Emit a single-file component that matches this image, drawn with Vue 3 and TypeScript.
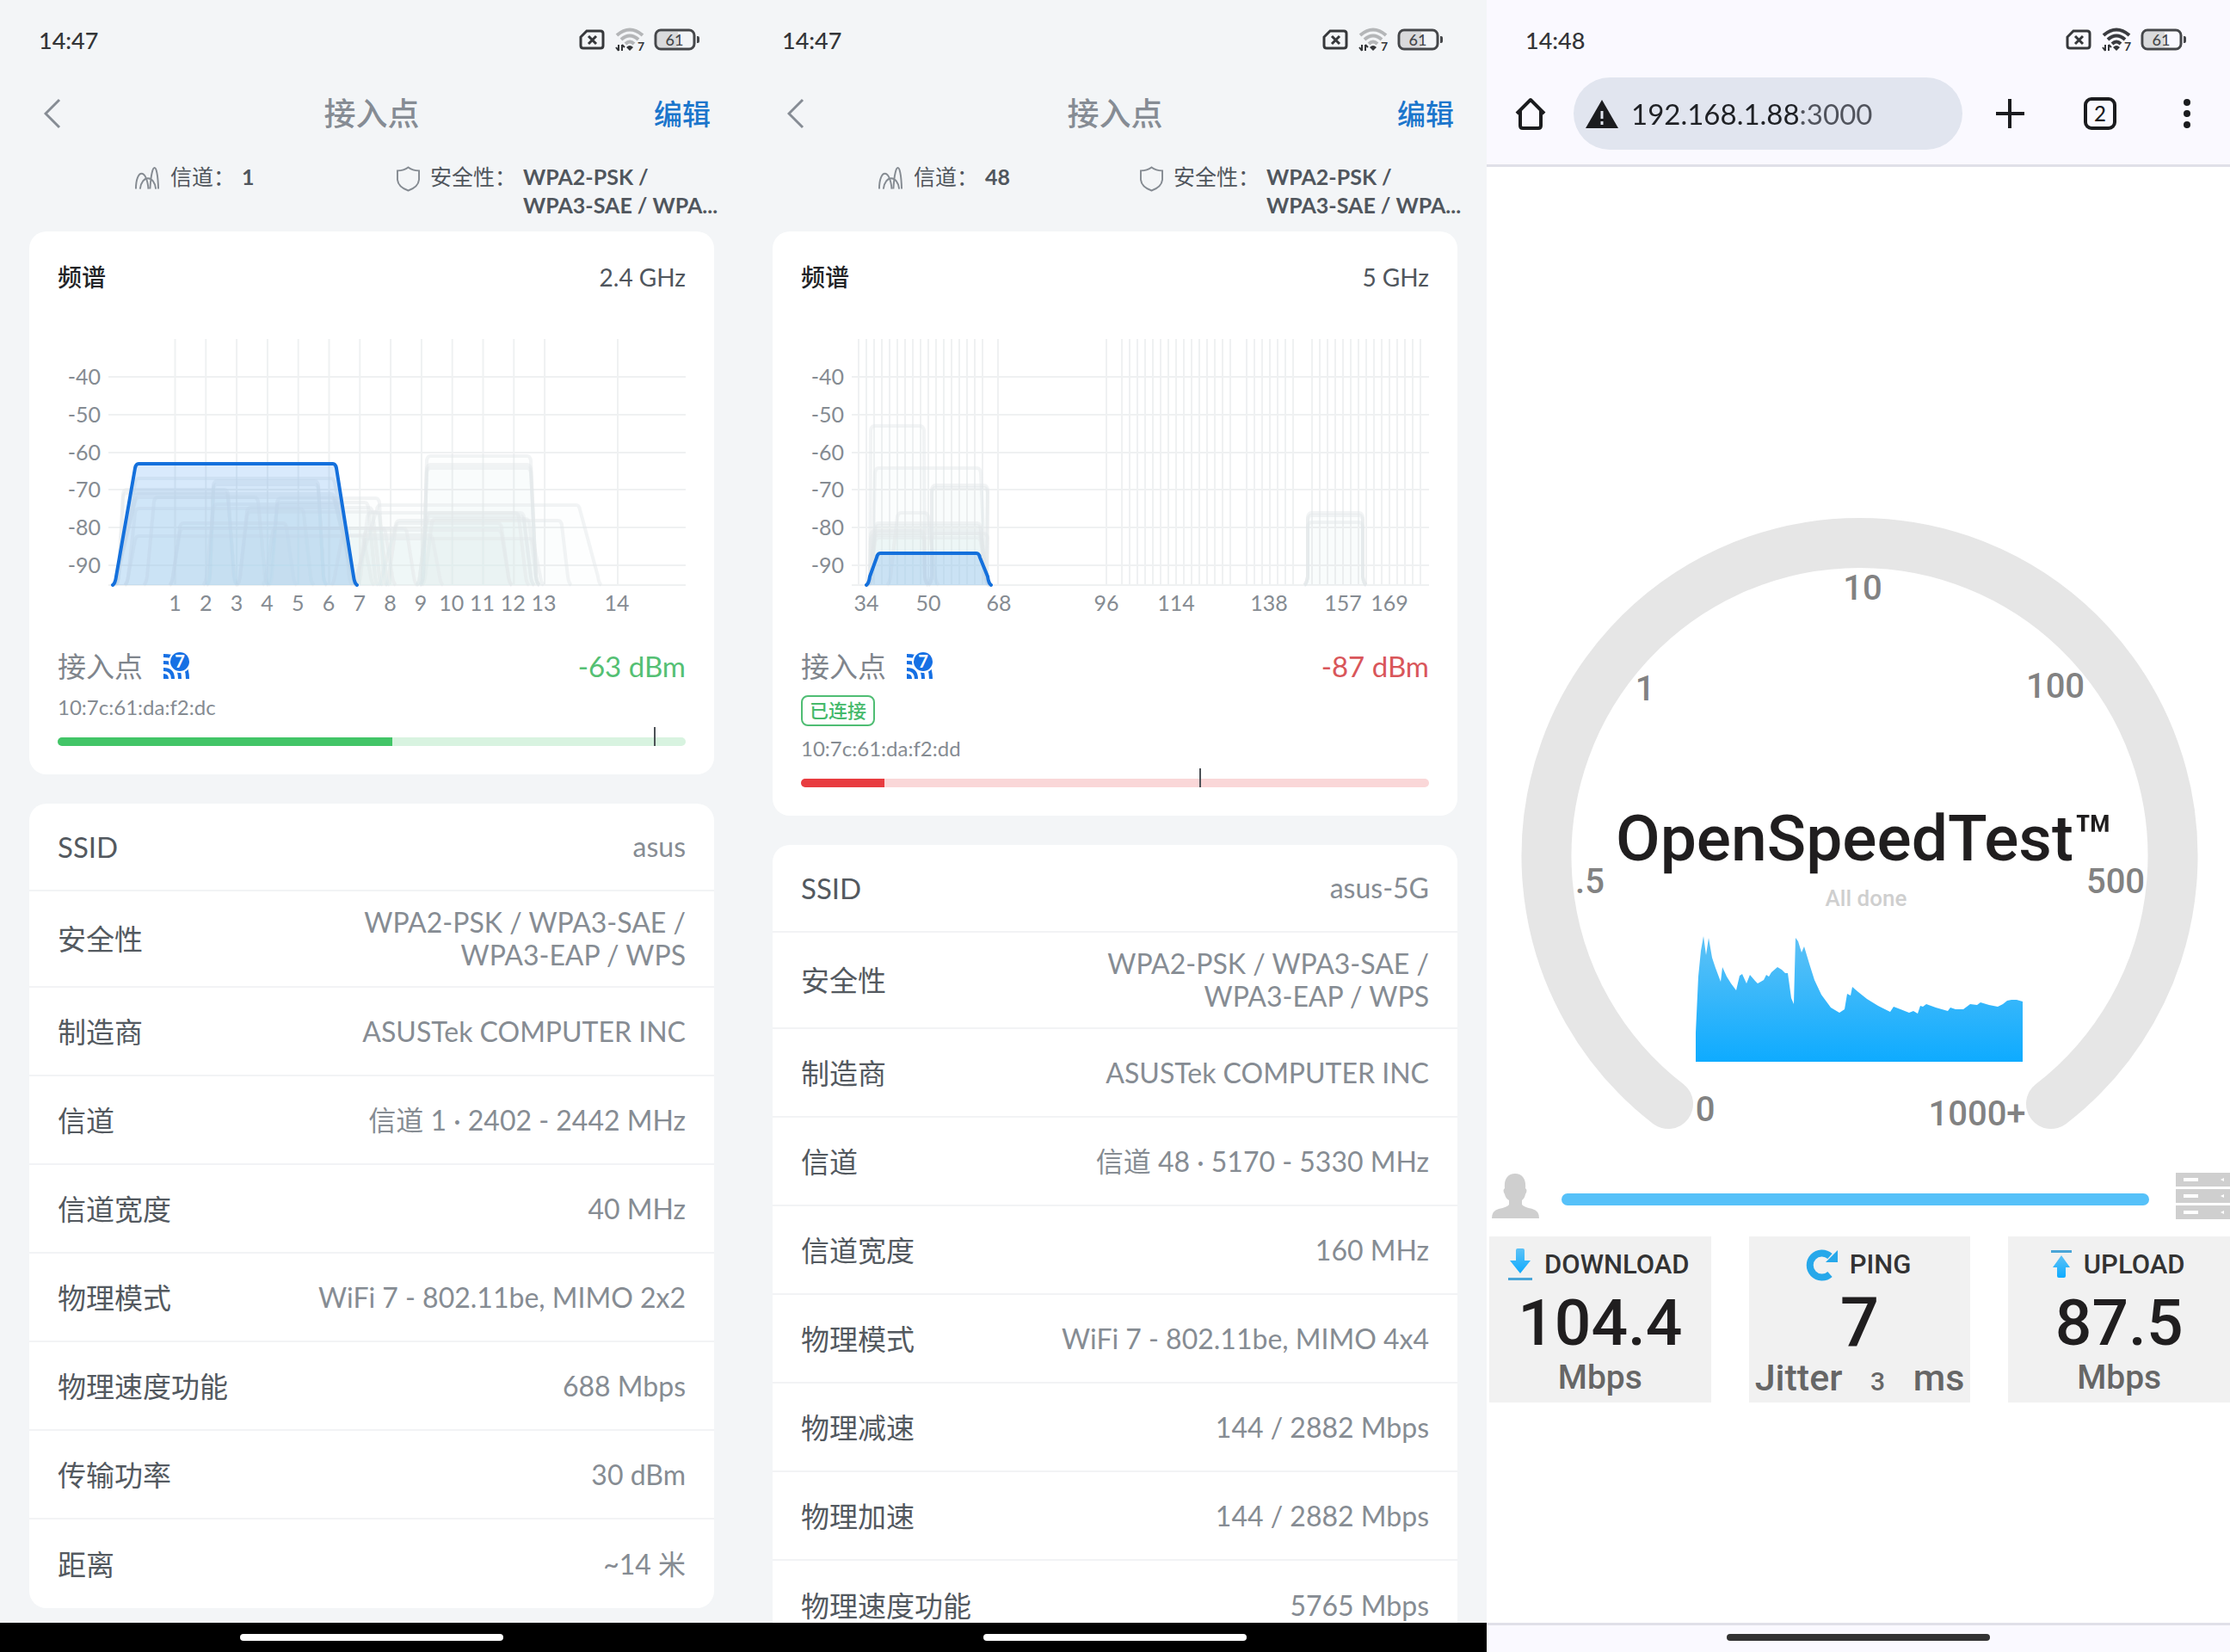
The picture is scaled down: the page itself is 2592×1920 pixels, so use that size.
<script setup lang="ts">
interface Row { label: string; value: string[] }
interface AccessPoint {
  channel: string
  band: string
  grid: number[]
  ticks: { x: number; text: string }[]
  others: string[]
  own: string
  bssid: string
  connected: boolean
  level: string
  tone: 'good' | 'bad'
  fill: number
  mark: number
  rows: Row[]
}
interface Phone { time: string; ap?: AccessPoint }

const BASE = 680
const levels = [-40, -50, -60, -70, -80, -90].map((db, i) => ({ db, y: 438 + Math.round(i * 43.8) }))

/** Signal outline: flat top between l and r, feet reaching the base line. */
function trap(l: number, r: number, y: number, footL: number, footR: number): string {
  const h = BASE - y
  const k = Math.min(5, h / 4)
  return `M${footL} ${BASE} Q${footL + 3} ${BASE - 2} ${footL + 4} ${BASE - k * 2} L${l - 3} ${y + k} Q${l - 2} ${y} ${l + 1} ${y} ` +
    `L${r - 1} ${y} Q${r + 2} ${y} ${r + 3} ${y + k} L${footR - 4} ${BASE - k * 2} Q${footR - 3} ${BASE - 2} ${footR} ${BASE}`
}
const span = (from: number, step: number, count: number): number[] =>
  Array.from({ length: count }, (_, i) => from + step * i)
const narrow = (l: number, r: number, y: number): string => trap(l, r, y, l - 15, r + 15)

const security = ['WPA2-PSK / WPA3-SAE /', 'WPA3-EAP / WPS']

const ap24: AccessPoint = {
  channel: '1',
  band: '2.4 GHz',
  grid: [...span(203.5, 35.8, 13), 718],
  ticks: [...span(203.5, 35.7, 13).map((x, i) => ({ x, text: String(i + 1) })), { x: 717, text: '14' }],
  others: [
    trap(499, 614, 530, 488, 627), trap(499, 614, 540, 488, 627), trap(499, 614, 544, 488, 627),
    trap(160, 386, 556, 132, 414), trap(251, 367, 559, 240, 380), trap(251, 367, 563, 240, 380),
    trap(146, 262, 569, 134, 276), trap(146, 262, 573, 134, 276), trap(160, 386, 574, 132, 414), trap(160, 386, 578, 132, 414),
    narrow(182, 297, 578), trap(325, 438, 579, 312, 450), narrow(325, 425, 584), narrow(290, 430, 590),
    narrow(251, 395, 586), narrow(160, 350, 591), narrow(290, 438, 595),
    trap(441, 671, 587, 410, 699), trap(463, 650, 605, 440, 664),
    narrow(430, 606, 596), narrow(499, 600, 596), narrow(499, 606, 600), narrow(505, 612, 603),
    narrow(463, 580, 608), narrow(320, 470, 614), narrow(212, 330, 608), narrow(212, 445, 614),
    narrow(160, 420, 623), narrow(427, 617, 626), narrow(427, 580, 616), narrow(400, 500, 622),
  ],
  own: trap(160, 388, 539, 131, 415),
  bssid: '10:7c:61:da:f2:dc',
  connected: false,
  level: '-63 dBm',
  tone: 'good',
  fill: 53.3,
  mark: 94.9,
  rows: [
    { label: 'SSID', value: ['asus'] },
    { label: '安全性', value: security },
    { label: '制造商', value: ['ASUSTek COMPUTER INC'] },
    { label: '信道', value: ['信道 1 · 2402 - 2442 MHz'] },
    { label: '信道宽度', value: ['40 MHz'] },
    { label: '物理模式', value: ['WiFi 7 - 802.11be, MIMO 2x2'] },
    { label: '物理速度功能', value: ['688 Mbps'] },
    { label: '传输功率', value: ['30 dBm'] },
    { label: '距离', value: ['~14 米'] },
  ],
}

const ap5: AccessPoint = {
  channel: '48',
  band: '5 GHz',
  grid: [...span(134, 9, 17), 296, 422, ...span(440, 9, 15), ...span(585, 9, 7), ...span(661, 9, 15)],
  ticks: [
    { x: 143, text: '34' }, { x: 215, text: '50' }, { x: 297, text: '68' }, { x: 422, text: '96' },
    { x: 503, text: '114' }, { x: 611, text: '138' }, { x: 697, text: '157' }, { x: 751, text: '169' },
  ],
  others: [
    trap(151, 207, 495, 143, 215), trap(156, 273, 544, 146, 285), trap(222, 281, 564, 215, 287), trap(222, 281, 567, 215, 287),
    narrow(182, 212, 596), trap(156, 273, 608, 144, 286), trap(156, 273, 611, 144, 286), trap(156, 273, 616, 144, 286),
    trap(151, 207, 617, 143, 215), trap(156, 273, 620, 144, 286), trap(151, 207, 622, 143, 215), trap(222, 281, 620, 215, 287),
    trap(156, 273, 625, 144, 286), trap(659, 717, 596, 652, 724), trap(659, 717, 599, 652, 724), trap(659, 717, 607, 652, 724),
  ],
  own: trap(158, 272, 643, 143, 288),
  bssid: '10:7c:61:da:f2:dd',
  connected: true,
  level: '-87 dBm',
  tone: 'bad',
  fill: 13.3,
  mark: 63.4,
  rows: [
    { label: 'SSID', value: ['asus-5G'] },
    { label: '安全性', value: security },
    { label: '制造商', value: ['ASUSTek COMPUTER INC'] },
    { label: '信道', value: ['信道 48 · 5170 - 5330 MHz'] },
    { label: '信道宽度', value: ['160 MHz'] },
    { label: '物理模式', value: ['WiFi 7 - 802.11be, MIMO 4x4'] },
    { label: '物理减速', value: ['144 / 2882 Mbps'] },
    { label: '物理加速', value: ['144 / 2882 Mbps'] },
    { label: '物理速度功能', value: ['5765 Mbps'] },
  ],
}

const phones: Phone[] = [{ time: '14:47', ap: ap24 }, { time: '14:47', ap: ap5 }, { time: '14:48' }]

const gaugeMarks = [
  { x: 437, y: 697, text: '10' }, { x: 184, y: 814, text: '1' }, { x: 661, y: 811, text: '100' },
  { x: 120, y: 1038, text: '.5' }, { x: 731, y: 1038, text: '500' }, { x: 254, y: 1303, text: '0' },
  { x: 570, y: 1308, text: '1000+' },
]
const speedCurve = '243,1234 243,1200 246,1135 249,1105 252,1088 255,1110 258,1090 262,1113 266,1125 272,1141 274,1124 279,1135 284,1143 290,1151 294,1134 297,1132 302,1143 306,1133 312,1140 315,1143 322,1139 325,1133 328,1135 331,1130 338,1124 343,1127 347,1131 350,1131 354,1160 357,1167 359,1090 362,1094 366,1107 369,1100 375,1120 381,1139 389,1156 400,1171 410,1177 416,1173 419,1155 423,1157 425,1147 432,1153 442,1161 455,1169 469,1176 473,1170 481,1173 491,1177 496,1175 501,1178 504,1169 507,1170 511,1167 522,1171 536,1175 539,1171 545,1173 554,1173 562,1167 570,1168 574,1165 584,1168 594,1170 600,1167 605,1163 610,1162 616,1162 623,1164 623,1234'
</script>

<template>
  <main class="board">
    <section v-for="(phone, n) in phones" :key="n" class="phone" :class="{ browser: !phone.ap }">
      <div class="status">
        <span class="time">{{ phone.time }}</span>
        <svg class="sim" viewBox="0 0 30 24"><path d="M9 2H25Q28 2 28 5V19Q28 22 25 22H5Q2 22 2 19V9Z" /><path d="M11 8L20 17M20 8L11 17" /></svg>
        <svg class="wifi" viewBox="0 -5 38 38">
          <g class="waves"><path d="M2 9Q17 -4 32 9" /><path d="M7 14Q17 5 27 14" /><path d="M12 19Q17 14 22 19" /></g>
          <path class="dark" d="M13 23Q17 19 21 23L17 27Z" />
          <path class="arrows" d="M4 20V27M1 23L4 27M8 27V20M11 23L8 20" />
          <text x="30" y="27">7</text>
        </svg>
        <svg class="battery" viewBox="0 0 54 26">
          <path class="charge" d="M7 4H28V22H7Q4 22 4 19V7Q4 4 7 4Z" /><rect x="2" y="2" width="45" height="22" rx="6" /><path class="nub" d="M50 9H51Q53 9 53 11V15Q53 17 51 17H50Z" />
          <text x="24" y="20">61</text>
        </svg>
      </div>

      <template v-if="phone.ap">
        <header class="nav">
          <button class="back" aria-label="返回"><svg viewBox="0 0 20 36"><path d="M18 2L2 18L18 34" /></svg></button>
          <h1>接入点</h1>
          <button class="edit">编辑</button>
        </header>
        <div class="info">
          <div class="fact">
            <svg class="peaks" viewBox="0 0 30 28"><path d="M1 27C1 3 14 2 16 27M6 27C8 10 23 10 25 27M18 27C20 -7 27 -7 28 27" /></svg>
            <span>信道：</span><b>{{ phone.ap.channel }}</b>
          </div>
          <div class="fact">
            <svg class="shield" viewBox="0 0 28 30"><path d="M14 1Q19 5 27 5V16Q26 25 14 29Q2 25 1 16V5Q9 5 14 1Z" /></svg>
            <span>安全性：</span><b>WPA2-PSK /<br>WPA3-SAE / WPA...</b>
          </div>
        </div>
        <div class="content">
          <article class="card spectrum">
            <div class="head"><h2>频谱</h2><span>{{ phone.ap.band }}</span></div>
            <svg class="chart" viewBox="67 390 730 334">
              <g class="grid">
                <path v-for="x in phone.ap.grid" :key="x" :d="`M${x} 394V680`" />
                <path v-for="l in levels" :key="l.db" :d="`M126 ${l.y}H797`" />
                <path d="M126 680H797" />
              </g>
              <path v-for="(d, i) in phone.ap.others" :key="i" class="other" :d="d" />
              <path class="own" :d="phone.ap.own" />
              <text v-for="l in levels" :key="l.db" x="117" :y="l.y + 9" text-anchor="end">{{ l.db }}</text>
              <text v-for="t in phone.ap.ticks" :key="t.text" :x="t.x" y="710" text-anchor="middle">{{ t.text }}</text>
            </svg>
            <div class="line">
              <span>接入点</span>
              <svg class="gen" viewBox="-1 -4 34 40">
                <path class="dot" d="M0 31V25Q6 25 6 31Z" />
                <path d="M0 20Q11 20 11 31M0 12Q19 12 19 31M0 4Q28 4 28 31" />
                <circle class="halo" cx="19" cy="11" r="13" /><circle class="disc" cx="19" cy="11" r="11" />
                <text x="19" y="18">7</text>
              </svg>
              <strong :class="phone.ap.tone">{{ phone.ap.level }}</strong>
            </div>
            <span v-if="phone.ap.connected" class="badge">已连接</span>
            <div class="bssid">{{ phone.ap.bssid }}</div>
            <div class="meter" :class="phone.ap.tone">
              <div class="fill" :style="{ width: phone.ap.fill + '%' }"></div>
              <i :style="{ left: phone.ap.mark + '%' }"></i>
            </div>
          </article>
          <dl class="card list">
            <div v-for="row in phone.ap.rows" :key="row.label" class="row">
              <dt>{{ row.label }}</dt>
              <dd><span v-for="v in row.value" :key="v">{{ v }}</span></dd>
            </div>
          </dl>
        </div>
      </template>

      <template v-else>
        <header class="toolbar">
          <button aria-label="主页"><svg class="home" viewBox="0 0 38 38"><path d="M3 19L19 3L35 19M7 16V33Q7 36 10 36H28Q31 36 31 33V16" /></svg></button>
          <label class="address">
            <svg viewBox="0 0 38 33"><path d="M19 0L38 33H0Z" /><path class="bang" d="M19 13V22M19 25V29" /></svg>
            <input type="text" value="192.168.1.88:3000" aria-label="网址">
          </label>
          <div class="actions">
            <button aria-label="新标签页"><svg class="plus" viewBox="0 0 33 34"><path d="M16 0V34M0 17H33" /></svg></button>
            <button class="tabs">2</button>
            <button aria-label="菜单"><svg class="dots" viewBox="0 0 26 34"><circle cx="13" cy="4" r="4" /><circle cx="13" cy="17" r="4" /><circle cx="13" cy="30" r="4" /></svg></button>
          </div>
        </header>
        <div class="speed">
          <svg class="gauge" viewBox="0 580 864 760">
            <defs><linearGradient id="area" x1="0" y1="0" x2="0" y2="1"><stop offset="0" stop-color="#5ec2f6" /><stop offset="1" stop-color="#0eabff" /></linearGradient></defs>
            <path class="arc" d="M211 1283A364 364 0 1 1 656 1283" />
            <polygon :points="speedCurve" fill="url(#area)" />
            <text v-for="m in gaugeMarks" :key="m.text" class="mark" :x="m.x" :y="m.y">{{ m.text }}</text>
            <text class="brand" x="150" y="1000">OpenSpeedTest™</text>
            <text class="note" x="441" y="1053">All done</text>
          </svg>
          <div class="link">
            <svg class="user" viewBox="0 0 55 52"><path d="M27 0C36 0 40 7 39 17Q42 19 39 24Q38 29 35 31V36Q37 39 47 41Q55 43 55 52H0Q0 43 8 41Q18 39 20 36V31Q16 29 15 24Q12 19 15 17C14 7 18 0 27 0Z" /></svg>
            <div class="track"></div>
            <svg class="server" viewBox="0 0 63 54"><path d="M0 0H63V16H0ZM0 19H63V35H0ZM0 38H63V54H0Z" /><path class="slot" d="M9 6H26V10H9ZM9 25H26V29H9ZM9 44H26V48H9ZM52 8L56 6V10ZM52 27L56 25V29ZM52 46L56 44V48Z" /></svg>
          </div>
          <div class="results">
            <article>
              <h3>
                <svg class="down" viewBox="0 0 28 38"><path d="M9 2Q9 0 11 0H17Q19 0 19 2V14H26L14 29L2 14H9Z" fill="url(#area)" /><path d="M0 34H28V37H0Z" fill="#4aa5d8" /></svg>
                DOWNLOAD
              </h3>
              <p class="num">104.4</p>
              <p class="unit">Mbps</p>
            </article>
            <article>
              <h3>
                <svg class="redo" viewBox="0 0 37 38"><path class="ring" d="M28 30A14 14 0 1 1 28 9" /><path d="M37 2V16H23Z" /></svg>
                PING
              </h3>
              <p class="num ping">7</p>
              <p class="unit jitter"><span>Jitter</span><small>3</small><span>ms</span></p>
            </article>
            <article>
              <h3>
                <svg class="up" viewBox="0 0 24 38"><path d="M0 2H24V5H0Z" fill="#4aa5d8" /><path d="M12 8L22 22H17V32Q17 34 15 34H9Q7 34 7 32V22H2Z" fill="url(#area)" /></svg>
                UPLOAD
              </h3>
              <p class="num">87.5</p>
              <p class="unit">Mbps</p>
            </article>
          </div>
        </div>
      </template>

      <footer class="home-bar"><i></i></footer>
    </section>
  </main>
</template>

<style>
body { margin: 0; }
</style>

<style scoped>
* { box-sizing: border-box; }
.board { display: grid; grid-template-columns: repeat(3, minmax(0, 1fr)); height: 100vh; font-family: Lato, "Noto Sans CJK SC", sans-serif; }
.phone { display: flex; flex-direction: column; min-height: 0; height: 100vh; overflow: hidden; background: #f3f5f7; color: #50565d; }
svg { display: block; flex: none; }
button { padding: 0; border: 0; background: none; font-family: inherit; color: inherit; cursor: pointer; }
h1, h2, h3, p, dl, dd { margin: 0; }

.status { flex: none; display: flex; align-items: center; height: 90px; padding: 2px 50px 0 45px; color: #333538; }
.time { margin-right: auto; font-size: 27px; font-weight: 500; }
.sim { width: 30px; height: 24px; margin-right: 12px; fill: none; stroke: #36383b; stroke-width: 3; }
.wifi { width: 38px; height: 38px; margin-right: 7px; }
.waves { fill: none; stroke: #b4b6b8; stroke-width: 4; }
.browser .waves { stroke: #3b3c40; }
.dark { fill: #333538; }
.arrows { fill: none; stroke: #333538; stroke-width: 2; }
.wifi text { font-size: 14px; font-weight: 700; fill: #333538; text-anchor: middle; }
.battery { width: 54px; height: 26px; }
.battery rect { fill: none; stroke: #45474a; stroke-width: 3; }
.battery .charge { fill: #d9dadc; }
.battery .nub { fill: #45474a; }
.battery text { font-size: 18px; font-weight: 500; fill: #45474a; text-anchor: middle; }

.nav { flex: none; display: grid; grid-template-columns: 1fr auto 1fr; align-items: center; height: 84px; padding: 0 38px 0 51px; }
.nav h1 { font-size: 37px; font-weight: 500; line-height: 48px; color: #868c94; margin-right: 13px; }
.back { justify-self: start; }
.back svg { width: 20px; height: 36px; fill: none; stroke: #868c94; stroke-width: 3; }
.edit { justify-self: end; font-size: 33px; font-weight: 500; line-height: 44px; color: #1c76cc; }

.info { flex: none; display: grid; grid-template-columns: 304px 1fr; padding: 15px 0 14px 157px; font-size: 25px; line-height: 33px; }
.fact { display: flex; align-items: flex-start; white-space: nowrap; }
.fact svg { margin: 4px 12px 0 0; fill: none; stroke: #858b92; stroke-width: 2; }
.fact b { margin-left: 8px; min-height: 66px; font-weight: 700; }
.peaks { width: 29px; height: 28px; }
.shield { width: 27px; height: 30px; }

.content { flex: 1; min-height: 0; overflow: hidden; padding: 0 34px; }
.card { background: #fff; border-radius: 20px; }
.spectrum { padding: 33px 33px 33px; }
.head { display: flex; justify-content: space-between; line-height: 40px; margin-bottom: 48px; font-size: 28px; }
.head h2 { font-size: 28px; font-weight: 500; color: #222427; }
.chart { width: 100%; height: auto; }
.grid path { stroke: #eff1f2; stroke-width: 2; }
.other { fill: #dfe8e8; fill-opacity: .06; stroke: #e3e7e8; stroke-opacity: .45; stroke-width: 4; }
.own { fill: #1c80f0; fill-opacity: .17; stroke: #1470dc; stroke-width: 4; stroke-linecap: round; }
.chart text { font-size: 25px; fill: #858b92; }
.line { display: flex; align-items: center; margin-top: 28px; line-height: 44px; font-size: 33px; color: #7f858c; }
.gen { width: 34px; height: 40px; margin-left: 23px; fill: none; stroke: #1670e4; stroke-width: 4; }
.gen .dot { fill: #1670e4; stroke: none; }
.gen .halo { fill: #fff; stroke: none; }
.gen .disc { fill: #1670e4; stroke: none; }
.gen text { font-size: 20px; font-weight: 700; fill: #fff; stroke: none; text-anchor: middle; }
.line strong { margin-left: auto; font-size: 33px; font-weight: 400; }
.line .good { color: #54c073; }
.line .bad { color: #d9565a; }
.badge { display: block; width: fit-content; margin-top: 12px; padding: 0 8px; border: 2px solid #4fbd73; border-radius: 8px; color: #45b96a; font-size: 22px; font-weight: 500; line-height: 32px; }
.bssid { margin-top: 12px; font-size: 24px; line-height: 28px; color: #858b92; }
.meter { position: relative; height: 10px; margin-top: 21px; border-radius: 5px; }
.meter .fill { height: 10px; border-radius: 5px 0 0 5px; }
.meter i { position: absolute; bottom: 0; width: 2px; height: 22px; background: #4d5257; }
.meter.good { background: #d8f3e0; }
.meter.good .fill { background: #42c567; }
.meter.bad { background: #fad7d8; }
.meter.bad .fill { background: #e83c40; }

.list { margin-top: 34px; }
.row { display: flex; align-items: center; justify-content: space-between; min-height: 103px; padding: 0 33px; border-bottom: 2px solid #f2f3f5; font-size: 33px; line-height: 38px; }
.row:first-child { min-height: 102px; }
.row:nth-child(2) { min-height: 112px; }
.row:last-child { border-bottom: 0; }
.row dt { color: #53595f; }
.row dd { font-size: 32px; color: #868c93; text-align: right; }
.row dd span { display: block; }

.home-bar { flex: none; display: flex; justify-content: center; padding-top: 13px; height: 34px; background: #000; }
.home-bar i { width: 306px; height: 8px; border-radius: 4px; background: #fff; }

.browser { background: #faf9ff; }
.toolbar { flex: none; display: flex; align-items: center; gap: 31px; height: 104px; padding: 0 37px 17px 32px; border-bottom: 3px solid #e0e0e8; color: #1b1c1f; }
.home { width: 38px; height: 38px; fill: none; stroke: #1b1c1f; stroke-width: 4; stroke-linejoin: round; }
.address { flex: 1; min-width: 0; display: flex; align-items: center; gap: 15px; height: 84px; padding: 0 14px; border-radius: 42px; background: #e1e5ef; }
.address svg { width: 38px; height: 33px; fill: #1b1c1f; }
.address .bang { fill: none; stroke: #e1e5ef; stroke-width: 3; }
.address input { flex: 1; min-width: 0; border: 0; padding: 0; outline: 0; height: 48px; font: 400 33px/48px Lato, sans-serif; color: transparent; background: linear-gradient(90deg, #1f2125 194px, #50535c 194px); background-clip: text; -webkit-background-clip: text; }
.actions { display: flex; align-items: center; gap: 69px; margin-left: 8px; }
.plus { width: 33px; height: 34px; stroke: #1b1c1f; stroke-width: 4; }
.tabs { width: 38px; height: 38px; border: 4px solid #1b1c1f; border-radius: 9px; font-size: 24px; font-weight: 500; line-height: 28px; }
.dots { width: 26px; height: 34px; fill: #1b1c1f; }

.speed { flex: 1; min-height: 0; padding-top: 386px; overflow: hidden; background: #fff; font-family: Roboto, sans-serif; }
.gauge { width: 100%; height: auto; }
.arc { fill: none; stroke: #e6e6e6; stroke-width: 58; stroke-linecap: round; }
.gauge text { text-anchor: middle; font-weight: 500; }
.gauge .mark { font-size: 40px; fill: #828282; }
.gauge .brand { font-size: 75px; text-anchor: start; fill: #201e1f; }
.gauge .note { font-size: 26px; fill: #cfcfcf; }
.link { display: flex; align-items: center; margin-top: 23px; padding-left: 6px; }
.user { width: 55px; height: 52px; margin-right: 26px; fill: #cfcfcf; }
.track { flex: 1; height: 14px; margin: 7px 31px 0 0; border-radius: 7px; background: #56c1f9; }
.server { width: 63px; height: 54px; fill: #cfcfcf; }
.server .slot { fill: #fff; }
.results { display: grid; grid-template-columns: repeat(3, 1fr); gap: 44px; margin-top: 20px; padding-left: 3px; }
.results article { padding: 13px 0; height: 193px; background: #f1f1f1; text-align: center; white-space: nowrap; }
.results h3 { display: flex; align-items: center; justify-content: center; gap: 14px; padding-right: 3px; font-size: 31px; font-weight: 500; line-height: 40px; color: #333; }
.down { width: 28px; height: 38px; }
.up { width: 24px; height: 38px; }
.redo { width: 37px; height: 38px; fill: #27a8ea; }
.redo .ring { fill: none; stroke: #27a8ea; stroke-width: 8; }
.num { margin-top: 7px; font-size: 75px; font-weight: 500; line-height: 80px; color: #201e1f; }
.num.ping { font-size: 80px; }
.unit { margin-top: 4px; font-size: 39px; line-height: 40px; font-weight: 500; color: #666; }
.unit.jitter { display: flex; align-items: baseline; justify-content: space-between; padding: 0 7px; font-size: 43px; }
.unit small { font-size: 30px; }

.browser .home-bar { padding-top: 10px; border-top: 3px solid #e0e0e8; background: #faf9ff; }
.browser .home-bar i { background: #333; }
</style>
